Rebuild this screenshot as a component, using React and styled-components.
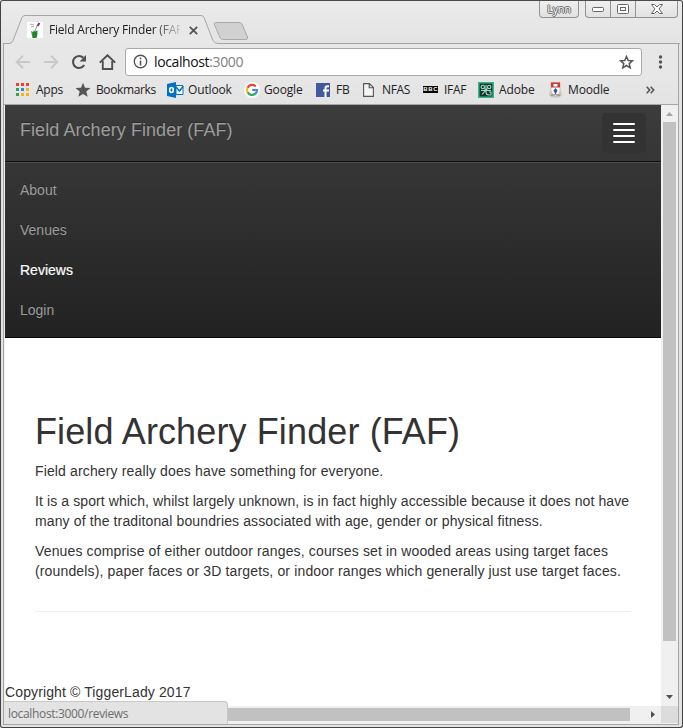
import React from 'react';
import styled, { createGlobalStyle } from 'styled-components';

const Global = createGlobalStyle`
  * { box-sizing: border-box; }
  html, body { margin: 0; padding: 0; overflow: hidden; }
  body { font-family: "Liberation Sans", Arial, sans-serif; background: #e4e4e4; }
  svg { display: block; flex: none; }
  h1, p, ul { margin: 0; padding: 0; }
`;

const Window = styled.div`
  width: 683px;
  height: 728px;
  display: flex;
  flex-direction: column;
  background: linear-gradient(#ebebeb, #e3e3e3 44px);
  border: 1px solid #424242;
  border-top-color: #4c4c4c;
  border-radius: 3px;
  overflow: hidden;
`;

const TabStrip = styled.header`
  height: 42px;
  flex: none;
  display: flex;
  align-items: flex-start;
  position: relative;
`;

const StripShape = styled.svg`
  position: absolute;
  left: 0;
  top: 0;
`;

const Tab = styled.div`
  position: relative;
  display: flex;
  align-items: center;
  width: 186px;
  height: 28px;
  margin: 15px 0 0 26px;
`;

const TabTitle = styled.span`
  width: 131px;
  margin: 0 9px 0 6px;
  font: 12px/18px "Open Sans", sans-serif;
  letter-spacing: -0.2px;
  white-space: nowrap;
  overflow: hidden;
  color: #222;
  mask-image: linear-gradient(90deg, #000 105px, rgba(0, 0, 0, 0.15) 131px);
`;

const WindowButtons = styled.div`
  position: relative;
  display: flex;
  margin-left: auto;
  margin-right: 4px;
`;

const Caption = styled.div`
  width: ${(p) => p.$w}px;
  height: 17px;
  display: flex;
  align-items: center;
  justify-content: center;
  border: 1px solid #929292;
  border-top: 0;
  border-left-width: ${(p) => (p.$joined ? 0 : 1)}px;
  border-radius: ${(p) => p.$radius || '0'};
  margin-right: ${(p) => p.$gap || 0}px;
  background: linear-gradient(#efefef, #e2e2e2);
  font: 11px/14px "Open Sans", sans-serif;
  letter-spacing: -0.3px;
  color: #f4f4f4;
  text-shadow: 1px 0 #6a6a6a, -1px 0 #6a6a6a, 0 1px #6a6a6a, 0 -1px #6a6a6a;
`;

const Toolbar = styled.div`
  height: 33px;
  flex: none;
  display: flex;
  align-items: center;
  padding: 4px 0 0 14px;
  margin: 0 3px 0 2px;
  border-left: 1px solid #a5a5a5;
  border-right: 1px solid #a5a5a5;
  background: #e7e7e7;
`;

const NavIcons = styled.div`
  display: flex;
  gap: 12px;
  margin-left: -3px;
`;

const AddressBar = styled.div`
  width: 517px;
  height: 28px;
  margin-left: 9px;
  display: flex;
  align-items: center;
  padding: 0 7px;
  border: 1px solid #aaa;
  border-radius: 3px;
  background: #fff;
`;

const Url = styled.span`
  flex: 1;
  margin-left: 6px;
  font: 14px/20px "Open Sans", sans-serif;
  letter-spacing: -0.38px;
  color: #808080;
  b { font-weight: 400; color: #111; }
`;

const Bookmarks = styled.nav`
  height: 29px;
  flex: none;
  display: grid;
  grid-template-columns: 60px 92px 77px 72px 46px 61px 55px 70px 98px 16px;
  align-items: center;
  padding: 0 0 1px 11px;
  margin: 0 3px 0 2px;
  border: solid #a5a5a5;
  border-width: 0 1px 1px;
  background: linear-gradient(#e7e7e7, #e3e3e3);
`;

const Bookmark = styled.a`
  display: flex;
  align-items: center;
  gap: ${(p) => p.$gap}px;
  margin-left: ${(p) => p.$shift || 0}px;
  font: 12px/18px "Open Sans", sans-serif;
  letter-spacing: ${(p) => p.$track ?? -0.15}px;
  color: #222;
  white-space: nowrap;
`;

const Frame = styled.div`
  height: 620px;
  flex: none;
  position: relative;
  margin: 0 3px 0 2px;
  border: solid #a5a5a5;
  border-width: 0 1px 1px;
  padding: 0 1px;
  display: grid;
  grid-template-columns: 656px 17px;
  grid-template-rows: 601px 17px;
  background: #f0f0f0;
`;

const Page = styled.main`
  background: #fff;
  color: #333;
  font-size: 14px;
  line-height: 20px;
`;

const Navbar = styled.div`
  height: 233px;
  border-bottom: 1px solid #080808;
  background: linear-gradient(#3c3c3c, #222);
`;

const NavHeader = styled.div`
  height: 56px;
  display: flex;
  justify-content: space-between;
  padding: 8px 15px;
`;

const Brand = styled.a`
  padding-top: 7px;
  font-size: 18px;
  line-height: 20px;
  letter-spacing: 0.06px;
  color: #9d9d9d;
  text-shadow: 0 -1px 0 rgba(0, 0, 0, 0.25);
`;

const Toggle = styled.div`
  width: 44px;
  height: 40px;
  padding: 10px 11px;
  display: flex;
  flex-direction: column;
  gap: 4px;
  border-radius: 4px;
  background: #333;
`;

const Bar = styled.span`
  height: 2px;
  border-radius: 1px;
  background: #fff;
`;

const Menu = styled.div`
  border-top: 1px solid #101010;
  box-shadow: inset 0 1px 0 rgba(255, 255, 255, 0.1);
  padding: 8px 15px;
  display: flex;
  flex-direction: column;
`;

const MenuLink = styled.a`
  height: 40px;
  line-height: 20px;
  padding: 10px 0;
  color: ${(p) => (p.$active ? '#fff' : '#9d9d9d')};
  -webkit-text-stroke: ${(p) => (p.$active ? '0.2px #fff' : '0')};
  text-shadow: 0 -1px 0 rgba(0, 0, 0, 0.25);
`;

const Article = styled.article`
  width: 596px;
  margin-left: 30px;
  padding-top: 74px;
`;

const Title = styled.h1`
  font-size: 36px;
  line-height: 40px;
  font-weight: 400;
  letter-spacing: 0.12px;
  margin-bottom: 9px;
`;

const Paragraph = styled.p`
  margin-bottom: 10px;
`;

const Line = styled.span`
  display: block;
  white-space: nowrap;
  letter-spacing: ${(p) => p.$track}px;
`;

const Rule = styled.hr`
  margin: 30px 0 20px;
  border: 0;
  border-top: 1px solid #eee;
`;

const Copyright = styled.footer`
  margin-top: 70px;
  letter-spacing: 0.12px;
`;

const VScroll = styled.div`
  display: flex;
  flex-direction: column;
  align-items: center;
  justify-content: space-between;
  padding: 7px 0 7px;
`;

const VThumb = styled.div`
  width: 13px;
  height: 519px;
  margin: 6px 0 auto;
  background: #c1c1c1;
`;

const HScroll = styled.div`
  display: flex;
  align-items: center;
  justify-content: space-between;
  padding-right: 6px;
`;

const HThumb = styled.div`
  width: 604px;
  height: 13px;
  margin-left: 21px;
  background: #c1c1c1;
`;

const Corner = styled.div`
  background: #dcdcdc;
`;

const Status = styled.div`
  position: absolute;
  left: 0;
  bottom: 0;
  width: 224px;
  height: 23px;
  padding: 3px 0 0 4px;
  border: solid #c8c8c8;
  border-width: 1px 1px 0 0;
  border-radius: 0 4px 0 0;
  background: #e3e3e3;
  font: 12px/18px "Open Sans", sans-serif;
  letter-spacing: -0.34px;
  color: #6d6d6d;
`;

const ArrowIcon = ({ flip }) => (
  <svg width="16" height="16" viewBox="0 0 16 16" fill="none" stroke="#c9c9c9" strokeWidth="2">
    <path d={flip ? 'M1 8h13M8 1.7 14.3 8 8 14.3' : 'M15 8H2M8 1.7 1.7 8 8 14.3'} />
  </svg>
);

const ReloadIcon = () => (
  <svg width="16" height="16" viewBox="0 0 16 16">
    <path d="M13.2 11A6 6 0 1 1 12.4 3.8" fill="none" stroke="#505050" strokeWidth="2.1" />
    <path d="M15 1v6.4H8.6z" fill="#505050" />
  </svg>
);

const HomeIcon = () => (
  <svg width="17" height="16" viewBox="0 0 17 16" fill="none" stroke="#505050" strokeWidth="1.9">
    <path d="M.8 8.6 8.5 1.2l7.7 7.4M3.8 7v8h9.4V7" />
  </svg>
);

const AppsIcon = () => {
  const colors = ['#ea4335', '#ea4335', '#ea4335', '#34a060', '#2f86ef', '#f9b114', '#34a060', '#f9b114', '#f9b114'];
  return (
    <svg width="14" height="14" viewBox="0 0 14 14" shapeRendering="crispEdges">
      {colors.map((c, i) => (
        <rect key={i} x={(i % 3) * 5} y={Math.floor(i / 3) * 5} width="3" height="3" fill={c} />
      ))}
    </svg>
  );
};

const StarIcon = () => (
  <svg width="16" height="16" viewBox="0 0 16 16">
    <path d="m8 .8 2 5 5.500.3-4.200 3.400 1.400 5.300L8 11.900l-4.700 2.900 1.400-5.300L.5 6.100 6 5.800z" fill="#555" />
  </svg>
);

const OutlookIcon = () => (
  <svg width="17" height="16" viewBox="0 0 17 16">
    <path d="M9 3.500h7v9H9z" fill="#fff" stroke="#0072c6" />
    <path d="m9 5 3.500 4L16 4.500" fill="none" stroke="#0072c6" strokeWidth="1.500" />
    <path d="m0 2 9-2v16l-9-2z" fill="#0072c6" />
    <ellipse cx="4.500" cy="8" rx="1.800" ry="2.500" fill="none" stroke="#fff" strokeWidth="1.600" />
  </svg>
);

const GoogleIcon = () => (
  <svg width="16" height="16" viewBox="0 0 16 16">
    <circle cx="8" cy="8" r="8" fill="#fff" />
    <g fill="none" strokeWidth="2.200">
      <path d="M11.800 4.500A5 5 0 0 0 3.600 5.700" stroke="#ea4335" />
      <path d="M3.600 5.600a5 5 0 0 0 0 4.800" stroke="#fbbc05" />
      <path d="M3.600 10.300a5 5 0 0 0 7.700 1.400" stroke="#34a853" />
      <path d="M11.200 11.800A5 5 0 0 0 13 8H8.200" stroke="#4285f4" />
    </g>
  </svg>
);

const FacebookIcon = () => (
  <svg width="14" height="14" viewBox="0 0 14 14">
    <path d="M0 0h14v14H0z" fill="#3f5b9d" />
    <path d="M9.500 14V5.200q0-2 2-2H13M7 7.500h6" fill="none" stroke="#fff" strokeWidth="2" />
  </svg>
);

const PageIcon = () => (
  <svg width="11" height="14" viewBox="0 0 11 14" fill="#f4f4f4" stroke="#555" strokeWidth="1.100">
    <path d="M.6.6h5.800l4 4v8.800H.6zM6.200.8v4h4" />
  </svg>
);

const BbcMark = styled.span`
  width: 15px;
  height: 7px;
  display: grid;
  grid-template-columns: repeat(3, 5px);
  i {
    background: #000;
    color: #fff;
    font: 700 6px/7px "Liberation Sans", sans-serif;
    text-align: center;
    letter-spacing: 0;
  }
`;

const AdobeIcon = () => (
  <svg width="16" height="16" viewBox="0 0 16 16">
    <path d="M.8.8h14.400v14.400H.8z" fill="#17352d" stroke="#32b587" strokeWidth="1.600" />
    <g fill="none" stroke="#9bdcc5" strokeWidth="1.100">
      <circle cx="4.800" cy="5" r="1.700" />
      <circle cx="11.200" cy="5" r="1.700" />
      <path d="M8 3v7q0 3 3 3h2v-3h-2M8 8.500h5M6.500 6.500 8 8.500M9.500 6.500 8 8.500M3 8.500h4.500L4 12.500" />
    </g>
  </svg>
);

const CrestIcon = () => (
  <svg width="13" height="16" viewBox="0 0 13 16">
    <path d="M1 9 0 13.500l3 2h7l3-2L12 9z" fill="#c9c4bb" />
    <path d="M2 .5h9V9q0 3-4.500 5Q2 12 2 9z" fill="#fff" stroke="#c9a9a5" strokeWidth=".7" />
    <path d="M2 .5h9v5H2z" fill="#c93b35" />
    <path d="M4.500 2h4v2.500h-4z" fill="#fff" />
    <path d="m6.500 6 2 2.500-2 4-2-4z" fill="#31569a" />
    <path d="m2 13.500 4.500-1 4.500 1" fill="none" stroke="#888" />
  </svg>
);

const items = [
  { label: 'Apps', icon: <AppsIcon />, gap: 6, shift: 1, track: -0.25 },
  { label: 'Bookmarks', icon: <StarIcon />, gap: 5, track: -0.38 },
  { label: 'Outlook', icon: <OutlookIcon />, gap: 4 },
  { label: 'Google', icon: <GoogleIcon />, gap: 4 },
  { label: 'FB', icon: <FacebookIcon />, gap: 6, track: -0.3 },
  { label: 'NFAS', icon: <PageIcon />, gap: 8, shift: 1, track: -0.35 },
  { label: 'IFAF', icon: <BbcMark><i>B</i><i>B</i><i>C</i></BbcMark>, gap: 6, track: -0.3 },
  { label: 'Adobe', icon: <AdobeIcon />, gap: 5 },
  { label: 'Moodle', icon: <CrestIcon />, gap: 6, shift: 1 },
];

const links = ['About', 'Venues', 'Reviews', 'Login'];

const paragraphs = [
  [{ text: 'Field archery really does have something for everyone.', track: 0.14 }],
  [
    { text: 'It is a sport which, whilst largely unknown, is in fact highly accessible because it does not have', track: 0.1 },
    { text: 'many of the traditonal boundries associated with age, gender or physical fitness.', track: 0.13 },
  ],
  [
    { text: 'Venues comprise of either outdoor ranges, courses set in wooded areas using target faces', track: 0.145 },
    { text: '(roundels), paper faces or 3D targets, or indoor ranges which generally just use target faces.', track: 0.15 },
  ],
];

export default function App() {
  return (
    <>
      <Global />
      <Window>
        <TabStrip>
          <StripShape width="681" height="43" viewBox="1 1 681 43">
            <path d="M3 44V43.500H9Q12 43.500 13 40.500L22 17.500Q23 15.500 25 15.500H201Q203 15.500 204 17.500L213 40.500Q215 43.500 218 43.500H680V44Z" fill="#e8e8e8" />
            <path d="M3 43.500H9Q12 43.500 13 40.500L22 17.500Q23 15.500 25 15.500H201Q203 15.500 204 17.500L213 40.500Q215 43.500 218 43.500H680" fill="none" stroke="#a5a5a5" />
            <path d="M215.500 22.500H239Q241 22.500 242 24L247.500 37Q248 39.500 246 39.500H223Q221 39.500 220 37.500L214.500 25Q213.500 22.500 215.500 22.500Z" fill="#d1d1d1" stroke="#aaa" />
          </StripShape>
          <Tab>
            <svg width="16" height="16" viewBox="0 0 16 16">
              <path d="M0 0h16v16H0z" fill="#fff" />
              <path d="m4 9 2 1 1-2 1.500 2 2-2v4l-1 4H5.500z" fill="#359b35" />
              <path d="M7 10v6M9 9v6" stroke="#126c20" />
              <path d="m3 2 4 1M4 5l3-1" stroke="#aaa" />
              <path d="m12.500 1-2 3" stroke="#842b85" strokeWidth="2" />
              <path d="m10 4-2 5" stroke="#777" strokeWidth=".8" />
            </svg>
            <TabTitle>Field Archery Finder (FAF)</TabTitle>
            <svg width="9" height="9" viewBox="0 0 9 9">
              <path d="m.8.8 7.400 7.400M8.200.8.800 8.200" stroke="#555" strokeWidth="1.800" />
            </svg>
          </Tab>
          <WindowButtons>
            <Caption $w={40} $radius="0 0 4px 4px" $gap={6}>Lynn</Caption>
            <Caption $w={26} $radius="0 0 0 4px">
              <svg width="12" height="5" viewBox="0 0 12 5"><rect x=".5" y=".5" width="11" height="4" rx="1" fill="#fff" stroke="#666" /></svg>
            </Caption>
            <Caption $w={25} $joined>
              <svg width="12" height="10" viewBox="0 0 12 10" fill="#fff" stroke="#666"><rect x=".5" y=".5" width="11" height="9" rx="1" /><rect x="3.500" y="3.500" width="5" height="3" /></svg>
            </Caption>
            <Caption $w={42} $joined $radius="0 0 4px 0">
              <svg width="12" height="10" viewBox="0 0 12 10"><path d="M.5.5h3L6 3 8.500.5h3L8 5l3.500 4.500h-3L6 7 3.500 9.500h-3L4 5z" fill="#fff" stroke="#666" /></svg>
            </Caption>
          </WindowButtons>
        </TabStrip>
        <Toolbar>
          <NavIcons>
            <ArrowIcon />
            <ArrowIcon flip />
            <ReloadIcon />
            <HomeIcon />
          </NavIcons>
          <AddressBar>
            <svg width="15" height="15" viewBox="0 0 15 15" fill="none" stroke="#555">
              <circle cx="7.500" cy="7.500" r="6.200" strokeWidth="1.400" />
              <path d="M7.500 6.500v5M7.500 3.500v1.700" strokeWidth="1.600" />
            </svg>
            <Url><b>localhost</b>:3000</Url>
            <svg width="15" height="14" viewBox="0 0 15 14">
              <path d="m7.500 1.500 1.700 4 4.300.3-3.300 2.800 1 4.200-3.700-2.300-3.700 2.300 1-4.200L1.500 5.800l4.300-.3z" fill="none" stroke="#555" strokeWidth="1.500" />
            </svg>
          </AddressBar>
          <svg width="35" height="14" viewBox="0 0 35 14" fill="#555">
            <circle cx="18.500" cy="2" r="1.700" />
            <circle cx="18.500" cy="7" r="1.700" />
            <circle cx="18.500" cy="12" r="1.700" />
          </svg>
        </Toolbar>
        <Bookmarks>
          {items.map((b) => (
            <Bookmark key={b.label} $gap={b.gap} $track={b.track} $shift={b.shift}>{b.icon}{b.label}</Bookmark>
          ))}
          <svg width="9" height="8" viewBox="0 0 9 8" fill="none" stroke="#555" strokeWidth="1.600">
            <path d="m.7.700 3 3.300-3 3.300M4.700.700l3 3.300-3 3.300" />
          </svg>
        </Bookmarks>
        <Frame>
          <Page>
            <Navbar>
              <NavHeader>
                <Brand>Field Archery Finder (FAF)</Brand>
                <Toggle><Bar /><Bar /><Bar /><Bar /></Toggle>
              </NavHeader>
              <Menu>
                {links.map((l) => <MenuLink key={l} $active={l === 'Reviews'}>{l}</MenuLink>)}
              </Menu>
            </Navbar>
            <Article>
              <Title>Field Archery Finder (FAF)</Title>
              {paragraphs.map((lines, i) => (
                <Paragraph key={i}>
                  {lines.map((l) => <Line key={l.text} $track={l.track}>{l.text}</Line>)}
                </Paragraph>
              ))}
              <Rule />
            </Article>
            <Copyright>Copyright © TiggerLady 2017</Copyright>
          </Page>
          <VScroll>
            <svg width="7" height="4" viewBox="0 0 7 4"><path d="M0 4 3.500 0 7 4z" fill="#a3a3a3" /></svg>
            <VThumb />
            <svg width="7" height="4" viewBox="0 0 7 4"><path d="M0 0h7L3.500 4z" fill="#505050" /></svg>
          </VScroll>
          <HScroll>
            <HThumb />
            <svg width="4" height="7" viewBox="0 0 4 7"><path d="M0 0v7l4-3.500z" fill="#505050" /></svg>
          </HScroll>
          <Corner />
          <Status>localhost:3000/reviews</Status>
        </Frame>
      </Window>
    </>
  );
}
